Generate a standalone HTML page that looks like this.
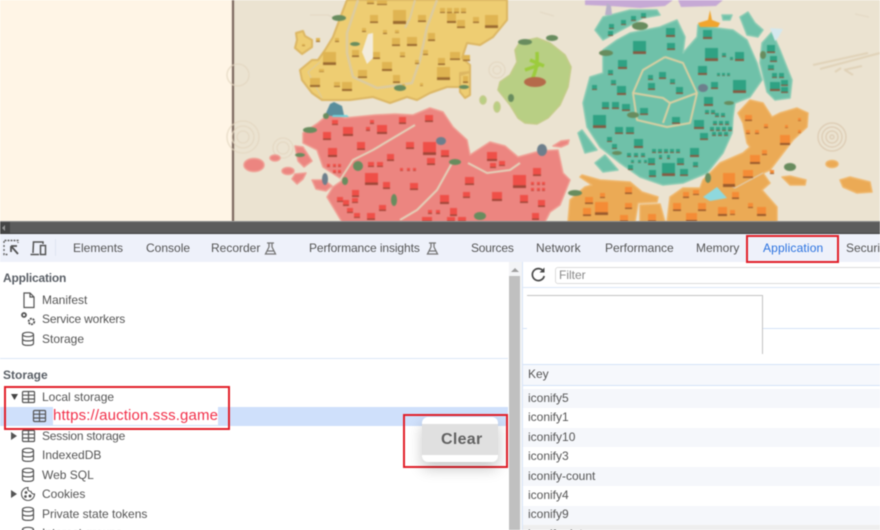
<!DOCTYPE html>
<html><head><meta charset="utf-8">
<style>
html,body{margin:0;padding:0;width:880px;height:530px;overflow:hidden;background:#fff}
body{position:relative;font-family:"Liberation Sans",sans-serif;font-size:12px;color:#555}
.a{position:absolute}
.t{position:absolute;white-space:nowrap;line-height:14px;height:14px;transform:translateY(-7px)}
#ui{position:absolute;left:0;top:0;width:880px;height:530px;filter:blur(.45px)}
svg{position:absolute;overflow:visible}
</style></head><body>

<svg style="left:0;top:0;filter:blur(.8px)" width="880" height="222" viewBox="0 0 880 222" stroke-linejoin="round">
<defs>
<linearGradient id="gy" x1="0" y1="0" x2="0" y2="1"><stop offset=".78" stop-color="#dfb452"/><stop offset=".8" stop-color="#9a6a30"/></linearGradient>
<linearGradient id="gr" x1="0" y1="0" x2="0" y2="1"><stop offset=".78" stop-color="#ef4f48"/><stop offset=".8" stop-color="#a04638"/></linearGradient>
<linearGradient id="gt" x1="0" y1="0" x2="0" y2="1"><stop offset=".78" stop-color="#2fa283"/><stop offset=".8" stop-color="#875a42"/></linearGradient>
<linearGradient id="go" x1="0" y1="0" x2="0" y2="1"><stop offset=".78" stop-color="#f48c36"/><stop offset=".8" stop-color="#9a5a2c"/></linearGradient>
</defs>
<rect width="880" height="222" fill="#ebe3d1"/>
<rect width="233" height="222" fill="#fff5e6"/>
<rect x="232" width="2" height="222" fill="#6e5a50"/>
<g fill="none" stroke="#e2d5bf" stroke-width="1">
<circle cx="243" cy="137" r="16"/><circle cx="243" cy="137" r="11"/><circle cx="243" cy="137" r="6"/>
<circle cx="283" cy="148" r="10"/><circle cx="283" cy="148" r="6"/>
<circle cx="497" cy="70" r="8"/><circle cx="497" cy="70" r="4"/>
<circle cx="238" cy="75" r="11"/>
</g>
<g fill="none" stroke="#d8c4aa" stroke-width="1">
<circle cx="832" cy="137" r="14"/><circle cx="832" cy="137" r="10"/><circle cx="832" cy="137" r="6"/><circle cx="832" cy="137" r="2"/>
</g>
<path d="M813 65l55-12M820 69l60-16M835 72l6-4M845 70l8 5M862 66l-18 4" fill="none" stroke="#e0d2b8" stroke-width="2"/>
<path d="M310 15h18l8 4M540 12l14 4M855 14l14 3" fill="none" stroke="#e2d7c2" stroke-width="1"/>

<g stroke="#dcb662" stroke-width="2" fill="#eecd72">
<path d="M347 0L342 13 333 37 325 50 318 60 312 60 300 70 302 80 312 93 322 100 332 100 350 100 373 97 390 103 407 97 417 100 430 93 447 87 460 87 460 73 470 72 470 65 462 58 467 43 480 45 493 37 507 20 507 0Z"/>
<path d="M296 33L303 31 305 36 312 40 312 47 302 54 295 48 297 40Z"/>
<path d="M460 75L470 72 470 95 465 98 460 92Z"/>
</g>
<path d="M358 0L347 33 347 53 353 77 377 88 400 85 412 83 420 60 427 27 437 0" fill="none" stroke="#dccb9f" stroke-width="2.5"/>
<path d="M415 0L410 18 405 28" fill="none" stroke="#dccb9f" stroke-width="2"/>
<path d="M320 62L308 72 322 98" fill="none" stroke="#dccb9f" stroke-width="1"/>
<path d="M368 34L373 33 373 58 367 64 362 52Z" fill="#f3ecdc"/>

<g fill="#b8cf84" stroke="#c2cb87" stroke-width="1.500">
<path d="M515 50L520 42 537 38 550 43 565 55 571 67 568 87 560 105 548 118 537 124 525 123 518 118 510 105 498 90 500 82 510 75 517 62Z"/>
<ellipse cx="483" cy="100" rx="3" ry="4"/>
<ellipse cx="497" cy="107" rx="3" ry="5"/>
</g>
<path d="M532 80c3-8 6-14 5-28M525 70l14-5M530 60l14 6" stroke="#9ccc3c" stroke-width="3.500" fill="none"/>
<ellipse cx="535" cy="82" rx="11" ry="5" fill="#b56a4a"/>
<g fill="#ec8580" stroke="#ef9f94" stroke-width="1.500">
<path d="M330 113L345 118 375 115 395 114 413 115 430 108 443 112 453 127 467 140 470 155 490 142 505 146 518 157 540 151 558 150 563 173 570 180 560 205 550 212 545 222 342 222 333 207 327 197 333 187 343 180 323 167 317 150 303 143 303 133 318 123Z"/>
<ellipse cx="254" cy="165" rx="10" ry="6.500"/><ellipse cx="275" cy="158" rx="5" ry="3"/><ellipse cx="288" cy="171" rx="6" ry="3.500"/>
<path d="M295 174l11-1-3 6-6 5-5-5Z"/><path d="M295 146l8 1 9 14-8 6-6-6Z"/>
<path d="M553 146l8-5 8-1-1 4-7 3Z"/>
<path d="M312 180h12l8 6-6 5-10-2Z"/>
</g>
<path d="M415 125L373 150 353 160 340 180M452 163L437 190 417 210 400 220M468 163L487 173 510 170 520 163" fill="none" stroke="#e3d2ba" stroke-width="2"/>

<g fill="#6fc1a9" stroke="#8ccbb3" stroke-width="1.500">
<path d="M603 50L617 40 630 33 660 27 677 20 685 37 683 53 697 37 698 25 717 28 733 30 747 40 757 63 762 80 750 97 735 103 733 117 732 133 723 153 707 173 683 183 663 185 640 177 620 163 600 147 587 127 583 103 590 77 603 73Z"/>
<path d="M595 30L603 17 630 10 657 10 660 15 643 18 627 27 603 40Z"/>
<path d="M740 17L748 12 755 23 763 30 758 37 747 35Z"/>
<path d="M762 43L772 32 780 50 792 80 790 98 775 100 767 92 760 63Z"/>
<path d="M578 133L582 130 597 150 585 153Z"/>
<path d="M595 163L605 155 618 170 603 172Z"/>
<path d="M722 15L732 15 730 20 723 20Z"/>
</g>
<path d="M665 57L683 63 697 93 690 123 667 127 637 120 633 93 643 70 665 57M633 93L663 98 670 103 663 123M670 103L697 93" fill="none" stroke="#d9cfa2" stroke-width="2"/>

<g fill="#ebaa55" stroke="#efb76c" stroke-width="1.500">
<path d="M738 113L750 100 763 103 772 117 780 113 797 108 808 113 807 127 793 140 780 157 770 170 763 173 770 183 762 190 777 207 777 222 667 222 670 197 683 188 700 188 703 180 720 163 743 153 750 147 747 143 743 123Z"/>
<path d="M582 175L600 180 630 182 642 192 658 197 657 202 638 203 635 222 568 222 570 200 585 187 592 185 580 177Z"/>
<path d="M640 205L660 204 665 222 640 222Z"/>
<ellipse cx="832" cy="164" rx="6" ry="3.500"/>
<path d="M840 180L850 177 870 182 872 192 857 193 843 187Z"/>
<path d="M782 177L790 176 806 180 805 185 790 185Z"/>
</g>
<path d="M763 173l-28 15-8-4" fill="none" stroke="#e0cfb5" stroke-width="1"/>

<path d="M585 0h88l-8 6-25 2-30-2-25-1ZM678 0h45l-7 6-35 1Z" fill="#c6a9d5"/>
<path d="M605 15l2-12 4 3 1 9Z" fill="#b8b0c8"/>

<g fill="url(#gy)">
<rect x="393" y="10" width="13" height="14"/><rect x="485" y="15" width="13" height="13"/><rect x="323" y="52" width="13" height="13"/><rect x="437" y="67" width="13" height="13"/>
<rect x="367" y="0" width="7" height="4"/><rect x="377" y="0" width="10" height="5"/><rect x="370" y="15" width="8" height="8"/><rect x="418" y="15" width="8" height="7"/>
<rect x="440" y="8" width="5" height="5"/><rect x="447" y="8" width="5" height="5"/><rect x="454" y="8" width="5" height="5"/><rect x="461" y="8" width="5" height="5"/>
<rect x="447" y="13" width="9" height="10"/><rect x="457" y="20" width="8" height="8"/><rect x="473" y="17" width="6" height="6"/>
<rect x="392" y="38" width="8" height="8"/><rect x="407" y="37" width="10" height="9"/><rect x="428" y="33" width="7" height="8"/><rect x="352" y="50" width="7" height="7"/>
<rect x="373" y="52" width="7" height="7"/><rect x="450" y="52" width="10" height="8"/><rect x="438" y="58" width="7" height="7"/><rect x="382" y="62" width="10" height="9"/>
<rect x="358" y="70" width="9" height="8"/><rect x="393" y="75" width="7" height="8"/><rect x="310" y="78" width="10" height="9"/><rect x="342" y="82" width="10" height="9"/>
<rect x="334" y="82" width="6" height="5"/><rect x="362" y="28" width="4" height="4"/><rect x="383" y="30" width="4" height="4"/><rect x="395" y="30" width="4" height="3"/>
<rect x="400" y="52" width="5" height="5"/><rect x="335" y="38" width="4" height="4"/><rect x="402" y="84" width="3" height="3"/><rect x="420" y="83" width="3" height="3"/>
<rect x="463" y="55" width="7" height="6"/><rect x="463" y="76" width="5" height="7"/><rect x="302" y="44" width="3" height="2"/><rect x="319" y="69" width="5" height="3"/><rect x="316" y="38" width="4" height="4"/>
<rect x="423" y="50" width="5" height="5"/><rect x="415" y="60" width="4" height="4"/>
</g>
<g fill="url(#gr)">
<rect x="423" y="142" width="13" height="13"/><rect x="365" y="173" width="13" height="12"/><rect x="513" y="175" width="13" height="13"/><rect x="377" y="125" width="10" height="9"/>
<rect x="343" y="127" width="10" height="9"/><rect x="399" y="117" width="7" height="7"/><rect x="425" y="115" width="8" height="7"/><rect x="332" y="120" width="6" height="5"/>
<rect x="323" y="132" width="8" height="8"/><rect x="357" y="142" width="8" height="8"/><rect x="328" y="148" width="9" height="9"/><rect x="406" y="142" width="8" height="7"/>
<rect x="441" y="150" width="8" height="7"/><rect x="427" y="158" width="8" height="7"/><rect x="387" y="154" width="7" height="7"/><rect x="368" y="162" width="6" height="5"/>
<rect x="377" y="162" width="6" height="5"/><rect x="383" y="182" width="7" height="7"/><rect x="410" y="183" width="8" height="7"/><rect x="352" y="190" width="7" height="7"/>
<rect x="440" y="195" width="9" height="9"/><rect x="465" y="177" width="9" height="8"/><rect x="463" y="192" width="7" height="6"/><rect x="492" y="192" width="10" height="9"/>
<rect x="520" y="195" width="8" height="8"/><rect x="538" y="200" width="7" height="7"/><rect x="533" y="168" width="8" height="8"/><rect x="487" y="152" width="10" height="9"/>
<rect x="490" y="163" width="6" height="5"/><rect x="499" y="161" width="6" height="5"/><rect x="450" y="208" width="7" height="8"/><rect x="422" y="217" width="10" height="5"/>
<rect x="532" y="213" width="7" height="7"/><rect x="367" y="213" width="8" height="7"/><rect x="379" y="205" width="7" height="6"/><rect x="337" y="197" width="6" height="5"/>
<rect x="343" y="200" width="6" height="6"/><rect x="352" y="198" width="6" height="5"/><rect x="347" y="208" width="6" height="5"/><rect x="354" y="213" width="6" height="5"/>
<rect x="531" y="182" width="3" height="3"/><rect x="537" y="182" width="3" height="3"/><rect x="542" y="182" width="3" height="3"/><rect x="531" y="188" width="3" height="3"/><rect x="537" y="188" width="3" height="3"/><rect x="542" y="188" width="3" height="3"/>
<rect x="400" y="168" width="3" height="3"/><rect x="407" y="168" width="3" height="3"/><rect x="413" y="168" width="3" height="3"/>
<rect x="327" y="164" width="3" height="3"/><rect x="333" y="164" width="3" height="3"/><rect x="338" y="164" width="3" height="3"/><rect x="333" y="170" width="3" height="3"/><rect x="338" y="170" width="3" height="3"/>
<rect x="436" y="210" width="4" height="4"/><rect x="428" y="210" width="4" height="4"/><rect x="447" y="217" width="8" height="5"/><rect x="458" y="217" width="8" height="5"/>
<rect x="370" y="120" width="4" height="4"/><rect x="366" y="127" width="4" height="4"/>
</g>
<g fill="url(#gt)">
<rect x="633" y="41" width="13" height="13"/><rect x="705" y="48" width="13" height="13"/><rect x="733" y="80" width="13" height="13"/><rect x="593" y="115" width="13" height="13"/>
<rect x="662" y="163" width="13" height="13"/><rect x="666" y="28" width="9" height="9"/><rect x="667" y="43" width="8" height="7"/><rect x="703" y="30" width="9" height="9"/>
<rect x="618" y="60" width="9" height="9"/><rect x="698" y="66" width="9" height="9"/><rect x="735" y="52" width="9" height="9"/><rect x="617" y="86" width="9" height="9"/>
<rect x="602" y="102" width="7" height="7"/><rect x="612" y="102" width="7" height="7"/><rect x="622" y="104" width="8" height="7"/><rect x="640" y="108" width="8" height="7"/>
<rect x="672" y="117" width="8" height="7"/><rect x="704" y="97" width="9" height="9"/><rect x="694" y="120" width="10" height="9"/><rect x="700" y="133" width="8" height="7"/>
<rect x="690" y="148" width="9" height="9"/><rect x="677" y="158" width="7" height="7"/><rect x="693" y="162" width="5" height="5"/><rect x="680" y="169" width="8" height="7"/>
<rect x="648" y="158" width="7" height="7"/><rect x="649" y="170" width="7" height="7"/><rect x="628" y="165" width="5" height="5"/><rect x="634" y="139" width="9" height="9"/>
<rect x="615" y="127" width="8" height="7"/><rect x="626" y="127" width="8" height="7"/><rect x="607" y="137" width="5" height="5"/><rect x="612" y="144" width="5" height="5"/>
<rect x="608" y="70" width="5" height="5"/><rect x="611" y="80" width="5" height="5"/><rect x="592" y="85" width="5" height="5"/><rect x="648" y="83" width="7" height="7"/>
<rect x="659" y="72" width="7" height="7"/><rect x="648" y="75" width="5" height="5"/><rect x="676" y="87" width="7" height="7"/><rect x="670" y="79" width="5" height="5"/>
<rect x="711" y="82" width="7" height="7"/><rect x="609" y="24" width="5" height="5"/><rect x="621" y="20" width="5" height="5"/><rect x="608" y="31" width="5" height="5"/>
<rect x="631" y="16" width="5" height="5"/><rect x="641" y="13" width="5" height="5"/><rect x="767" y="45" width="8" height="8"/>
<rect x="770" y="56" width="7" height="6"/><rect x="768" y="65" width="6" height="5"/><rect x="772" y="73" width="5" height="5"/><rect x="779" y="73" width="5" height="5"/>
<rect x="770" y="82" width="10" height="9"/><rect x="781" y="80" width="7" height="6"/><rect x="781" y="87" width="7" height="6"/><rect x="722" y="53" width="4" height="4"/><rect x="730" y="57" width="3" height="3"/>
<rect x="717" y="73" width="3" height="3"/><rect x="722" y="73" width="3" height="3"/><rect x="727" y="73" width="3" height="3"/>
<rect x="715" y="113" width="4" height="4"/><rect x="721" y="113" width="4" height="4"/>
<rect x="713" y="121" width="4" height="4"/><rect x="719" y="121" width="4" height="4"/><rect x="725" y="121" width="4" height="4"/>
<rect x="710" y="127" width="4" height="4"/><rect x="716" y="127" width="4" height="4"/><rect x="722" y="127" width="4" height="4"/><rect x="728" y="127" width="4" height="4"/>
<rect x="712" y="132" width="4" height="4"/><rect x="718" y="132" width="4" height="4"/><rect x="724" y="132" width="4" height="4"/>
<rect x="705" y="110" width="4" height="4"/><rect x="711" y="110" width="4" height="4"/>
<rect x="652" y="149" width="4" height="4"/><rect x="658" y="149" width="4" height="4"/><rect x="664" y="149" width="4" height="4"/><rect x="670" y="149" width="4" height="4"/><rect x="676" y="149" width="4" height="4"/>
<rect x="627" y="153" width="4" height="4"/><rect x="634" y="153" width="4" height="4"/><rect x="641" y="153" width="4" height="4"/><rect x="659" y="155" width="3" height="4"/><rect x="667" y="155" width="3" height="4"/>
<rect x="631" y="160" width="3" height="3"/><rect x="638" y="160" width="3" height="3"/><rect x="644" y="160" width="3" height="3"/>
</g>
<g fill="url(#go)">
<rect x="745" y="115" width="7" height="6"/><rect x="780" y="135" width="10" height="10"/><rect x="750" y="155" width="10" height="9"/>
<rect x="743" y="170" width="10" height="8"/><rect x="723" y="173" width="12" height="14"/><rect x="595" y="202" width="13" height="13"/><rect x="585" y="197" width="8" height="7"/>
<rect x="583" y="208" width="8" height="8"/><rect x="625" y="187" width="7" height="7"/><rect x="625" y="203" width="7" height="6"/><rect x="600" y="193" width="5" height="5"/>
<rect x="673" y="203" width="8" height="8"/><rect x="683" y="192" width="6" height="6"/><rect x="693" y="190" width="6" height="5"/><rect x="698" y="203" width="8" height="8"/>
<rect x="718" y="207" width="9" height="9"/><rect x="757" y="207" width="9" height="9"/><rect x="732" y="192" width="7" height="7"/><rect x="762" y="150" width="5" height="5"/>
<rect x="764" y="124" width="4" height="4"/><rect x="755" y="130" width="4" height="4"/><rect x="798" y="118" width="3" height="3"/><rect x="785" y="125" width="3" height="3"/><rect x="798" y="130" width="3" height="3"/>
<rect x="686" y="213" width="11" height="9"/><rect x="620" y="215" width="8" height="7"/><rect x="648" y="214" width="8" height="8"/><rect x="770" y="170" width="4" height="4"/><rect x="746" y="130" width="4" height="4"/>
<rect x="730" y="210" width="5" height="5"/><rect x="748" y="203" width="5" height="5"/>
</g>
<path d="M703 197L717 187 727 198 710 201Z" fill="#8fd8dd"/>
<path d="M330 104l4-2 8 4 2 9-14 1-4-3Z" fill="#5a8e9c"/>
<path d="M333 115h14l2 2h-17Z" fill="#6fd2dc"/>
<path d="M770 28l13 1-5 9-3 3Z" fill="#d5e8ee"/>
<path d="M698 23l10-3 2-10 2 10 8 3-2 4h-18Z" fill="#f1a52e"/>
<g fill="#688c5e">
<ellipse cx="339" cy="18" rx="7" ry="3"/><ellipse cx="355" cy="44" rx="5" ry="2"/><ellipse cx="400" cy="88" rx="6" ry="3"/><ellipse cx="464" cy="87" rx="5" ry="2"/>
<ellipse cx="310" cy="130" rx="7" ry="3"/><ellipse cx="300" cy="155" rx="5" ry="2"/><ellipse cx="326" cy="116" rx="3" ry="3"/>
<ellipse cx="358" cy="166" rx="5" ry="5"/><ellipse cx="345" cy="181" rx="3" ry="4"/><ellipse cx="455" cy="162" rx="6" ry="3"/><ellipse cx="480" cy="216" rx="6" ry="4"/><ellipse cx="394" cy="200" rx="3" ry="6"/>
<ellipse cx="606" cy="53" rx="7" ry="3"/><ellipse cx="640" cy="26" rx="8" ry="4"/><ellipse cx="633" cy="115" rx="6" ry="3"/><ellipse cx="729" cy="103" rx="5" ry="2"/><ellipse cx="617" cy="153" rx="5" ry="2"/>
<ellipse cx="790" cy="167" rx="6" ry="4"/><ellipse cx="708" cy="178" rx="3" ry="5"/><ellipse cx="575" cy="193" rx="7" ry="3"/><ellipse cx="763" cy="55" rx="3" ry="4"/>
<ellipse cx="525" cy="42" rx="7" ry="3"/><ellipse cx="552" cy="38" rx="6" ry="3"/><ellipse cx="511" cy="98" rx="3" ry="4"/>
</g>
<g fill="#6d7f8c"><ellipse cx="542" cy="150" rx="5" ry="6"/><ellipse cx="441" cy="141" rx="5" ry="4"/><ellipse cx="703" cy="88" rx="5" ry="4"/><ellipse cx="325" cy="179" rx="3" ry="6"/></g>
</svg>

<div id="ui">
<div class="a" style="left:0;top:221px;width:880px;height:13px;background:#5c5c5c"></div>
<div class="a" style="left:0;top:221px;width:880px;height:1px;background:#8a8a8a"></div>
<div class="a" style="left:0;top:233px;width:880px;height:1px;background:#3e3e3e"></div>
<div class="a" style="left:0;top:222px;width:10px;height:11px;background:#454545"></div>
<div class="a" style="left:2px;top:225px;width:0;height:0;border:3px solid transparent;border-right:3px solid #999;border-left:0"></div>

<div class="a" style="left:0;top:234px;width:880px;height:28px;background:#eef1fa"></div>
<svg style="left:0;top:234px" width="60" height="28" fill="none" stroke="#666">
<path d="M4 9V6.500H18V9M4 11v2M4 15v2M4 19v1.500H8" stroke-width="1.400" stroke-dasharray="2 1"/>
<path d="M11 12h6M11 12v6M11 12l7 8" stroke="#555" stroke-width="1.800"/>
<path d="M33 19L33.500 8H43V10M30.500 20.500H39" stroke="#555" stroke-width="1.500"/>
<rect x="40.500" y="11.500" width="5" height="9" stroke="#555" stroke-width="1.500"/>
<path d="M55.500 5V22" stroke="#dfe5f2"/>
</svg>
<div class="t" style="left:73px;top:248px">Elements</div>
<div class="t" style="left:146px;top:248px">Console</div>
<div class="t" style="left:211px;top:248px">Recorder</div>
<svg style="left:264px;top:242px" width="13" height="13" fill="none" stroke="#777" stroke-width="1.300"><path d="M3 1H10M5 1V5L1.500 12H11.500L8 5V1M3.500 9H9.500"/></svg>
<div class="t" style="left:309px;top:248px;letter-spacing:-.1px">Performance insights</div>
<svg style="left:426px;top:242px" width="13" height="13" fill="none" stroke="#777" stroke-width="1.300"><path d="M3 1H10M5 1V5L1.500 12H11.500L8 5V1M3.500 9H9.500"/></svg>
<div class="t" style="left:471px;top:248px;letter-spacing:-.2px">Sources</div>
<div class="t" style="left:536px;top:248px;letter-spacing:.1px">Network</div>
<div class="t" style="left:605px;top:248px">Performance</div>
<div class="t" style="left:696px;top:248px">Memory</div>
<div class="t" style="left:763px;top:248px;color:#2a72e0;letter-spacing:.15px">Application</div>
<div class="t" style="left:846px;top:248px">Securi</div>
<div class="a" style="left:746px;top:235px;width:89px;height:24px;border:2px solid #e2202a"></div>

<div class="t" style="left:3px;top:278px;font-weight:bold;color:#5a5f66;letter-spacing:-.2px">Application</div>
<svg style="left:21px;top:291px" width="16" height="18" fill="none" stroke="#555" stroke-width="1.200"><path d="M3 2H9L13 6V16.500H3ZM9 2V6H13"/></svg>
<div class="t" style="left:42px;top:300px">Manifest</div>
<svg style="left:20px;top:311px" width="18" height="17" fill="none" stroke="#555" stroke-width="1.800"><circle cx="4" cy="4" r="2"/><circle cx="11.500" cy="10.500" r="2.800" stroke-dasharray="2 .8"/></svg>
<div class="t" style="left:42px;top:319px;letter-spacing:-.15px">Service workers</div>
<svg style="left:21px;top:331px" width="14" height="16" fill="none" stroke="#555" stroke-width="1.200"><ellipse cx="7" cy="3.500" rx="5.500" ry="2.200"/><path d="M1.500 3.500V12.500C1.500 15 12.500 15 12.500 12.500V3.500M1.500 8C1.500 10.500 12.500 10.500 12.500 8"/></svg>
<div class="t" style="left:42px;top:339px">Storage</div>
<div class="a" style="left:0;top:358px;width:508px;height:1px;background:#dbe7f7"></div>
<div class="t" style="left:3px;top:375px;font-weight:bold;color:#5a5f66">Storage</div>

<div class="a" style="left:0;top:407px;width:508px;height:19px;background:#cfe0fb"></div>
<svg style="left:11px;top:394px" width="7" height="6"><path d="M0 0H7L3.500 6Z" fill="#444"/></svg>
<svg style="left:21px;top:390px" width="15" height="14" fill="none" stroke="#555" stroke-width="1.200"><rect x="1.500" y="1.500" width="12" height="11" rx="1"/><path d="M1.500 5.200H13.500M1.500 9H13.500M7.500 1.500V12.500"/></svg>
<div class="t" style="left:42px;top:397px">Local storage</div>
<svg style="left:32px;top:409px" width="15" height="14" fill="none" stroke="#555" stroke-width="1.200"><rect x="1.500" y="1.500" width="12" height="11" rx="1"/><path d="M1.500 5.200H13.500M1.500 9H13.500M7.500 1.500V12.500"/></svg>
<div class="a" style="left:53px;top:407px;width:165px;height:18px;background:#fff"></div>
<div class="t" style="left:53px;top:415.500px;font-size:15px;line-height:16px;height:16px;transform:translateY(-8px);color:#f2304a;letter-spacing:.14px">https://auction.sss.game</div>
<div class="a" style="left:4px;top:386px;width:222px;height:40px;border:2px solid #e2202a"></div>

<svg style="left:11px;top:432px" width="6" height="8"><path d="M0 0L6 4 0 8Z" fill="#555"/></svg>
<svg style="left:21px;top:429px" width="15" height="14" fill="none" stroke="#555" stroke-width="1.200"><rect x="1.500" y="1.500" width="12" height="11" rx="1"/><path d="M1.500 5.200H13.500M1.500 9H13.500M7.500 1.500V12.500"/></svg>
<div class="t" style="left:42px;top:436px;letter-spacing:-.2px">Session storage</div>
<svg style="left:21px;top:447px" width="14" height="16" fill="none" stroke="#555" stroke-width="1.200"><ellipse cx="7" cy="3.500" rx="5.500" ry="2.200"/><path d="M1.500 3.500V12.500C1.500 15 12.500 15 12.500 12.500V3.500M1.500 8C1.500 10.500 12.500 10.500 12.500 8"/></svg>
<div class="t" style="left:42px;top:455px">IndexedDB</div>
<svg style="left:21px;top:467px" width="14" height="16" fill="none" stroke="#555" stroke-width="1.200"><ellipse cx="7" cy="3.500" rx="5.500" ry="2.200"/><path d="M1.500 3.500V12.500C1.500 15 12.500 15 12.500 12.500V3.500M1.500 8C1.500 10.500 12.500 10.500 12.500 8"/></svg>
<div class="t" style="left:42px;top:475px">Web SQL</div>
<svg style="left:11px;top:490px" width="6" height="8"><path d="M0 0L6 4 0 8Z" fill="#555"/></svg>
<svg style="left:20px;top:486px" width="16" height="16" fill="none" stroke="#555" stroke-width="1.100"><path d="M8 1.500A6.500 6.500 0 1 0 14.500 8 3 3 0 0 1 11 5.500 3 3 0 0 1 8 1.500Z"/><circle cx="6" cy="6.500" r=".8" fill="#555"/><circle cx="10" cy="10" r=".9" fill="#555"/><circle cx="5.500" cy="10.500" r=".8" fill="#555"/></svg>
<div class="t" style="left:42px;top:494px">Cookies</div>
<svg style="left:21px;top:506px" width="14" height="16" fill="none" stroke="#555" stroke-width="1.200"><ellipse cx="7" cy="3.500" rx="5.500" ry="2.200"/><path d="M1.500 3.500V12.500C1.500 15 12.500 15 12.500 12.500V3.500M1.500 8C1.500 10.500 12.500 10.500 12.500 8"/></svg>
<div class="t" style="left:42px;top:514px">Private state tokens</div>
<svg style="left:21px;top:526px" width="14" height="16" fill="none" stroke="#555" stroke-width="1.200"><ellipse cx="7" cy="3.500" rx="5.500" ry="2.200"/><path d="M1.500 3.500V12.500"/><path d="M12.500 3.500V12"/></svg>
<div class="t" style="left:42px;top:533px">Interest groups</div>

<div class="a" style="left:403px;top:414px;width:101px;height:50px;border:2px solid #e2202a"></div>
<div class="a" style="left:422px;top:417px;width:76px;height:45px;background:#fff;border-radius:6px;box-shadow:0 7px 14px rgba(0,0,0,.22)"></div>
<div class="a" style="left:422px;top:424px;width:76px;height:31px;background:#e0e0e0"></div>
<div class="t" style="left:441px;top:439.500px;font-size:16px;line-height:18px;height:18px;transform:translateY(-9px);color:#555;letter-spacing:.3px;font-weight:bold;opacity:.9">Clear</div>

<div class="a" style="left:509px;top:262px;width:13px;height:268px;background:#f3f4f6"></div>
<div class="a" style="left:509px;top:276px;width:11px;height:254px;background:#c0c0c0"></div>
<div class="a" style="left:511px;top:268px;width:0;height:0;border:4px solid transparent;border-bottom:4px solid #a0a0a0;border-top:0"></div>
<div class="a" style="left:522px;top:262px;width:1px;height:268px;background:#d9e6f8"></div>

<svg style="left:530px;top:266px" width="17" height="17" fill="none" stroke="#4a4a4a" stroke-width="1.700"><path d="M13.500 5.500A6 6 0 1 0 14.200 10"/><path d="M14.500 1.500V6.500H9.500" fill="#4a4a4a" stroke="none"/></svg>
<div class="a" style="left:555px;top:267px;width:330px;height:15px;border:1px solid #dcdcdc;border-radius:3px;background:#fff"></div>
<div class="t" style="left:559px;top:275px;color:#8a8a8a">Filter</div>
<div class="a" style="left:523px;top:287px;width:357px;height:1px;background:#dbe7f7"></div>
<div class="a" style="left:527px;top:295px;width:236px;height:1px;background:#c4c4c4"></div>
<div class="a" style="left:762px;top:295px;width:1px;height:59px;background:#c4c4c4"></div>
<div class="a" style="left:523px;top:328px;width:4px;height:1px;background:#d5e3f7"></div>
<div class="a" style="left:763px;top:328px;width:117px;height:1px;background:#d5e3f7"></div>
<div class="a" style="left:523px;top:364px;width:357px;height:1px;background:#d5e3f7"></div>
<div class="a" style="left:523px;top:365px;width:357px;height:20px;background:#f6f8fc"></div>
<div class="a" style="left:523px;top:385px;width:357px;height:1px;background:#d5e3f7"></div>
<div class="t" style="left:528px;top:374px">Key</div>
<div class="a" style="left:523px;top:389px;width:357px;height:19px;background:#f5f7fb"></div>
<div class="a" style="left:523px;top:428px;width:357px;height:19px;background:#f5f7fb"></div>
<div class="a" style="left:523px;top:467px;width:357px;height:19px;background:#f5f7fb"></div>
<div class="a" style="left:523px;top:506px;width:357px;height:19px;background:#f5f7fb"></div>
<div class="a" style="left:523px;top:525px;width:357px;height:5px;background:#eeeeee"></div>
<div class="t" style="left:528px;top:398px">iconify5</div>
<div class="t" style="left:528px;top:417px">iconify1</div>
<div class="t" style="left:528px;top:437px">iconify10</div>
<div class="t" style="left:528px;top:456px">iconify3</div>
<div class="t" style="left:528px;top:476px">iconify-count</div>
<div class="t" style="left:528px;top:495px">iconify4</div>
<div class="t" style="left:528px;top:514px">iconify9</div>
<div class="t" style="left:528px;top:534px">iconify-data</div>
</div>
</body></html>
